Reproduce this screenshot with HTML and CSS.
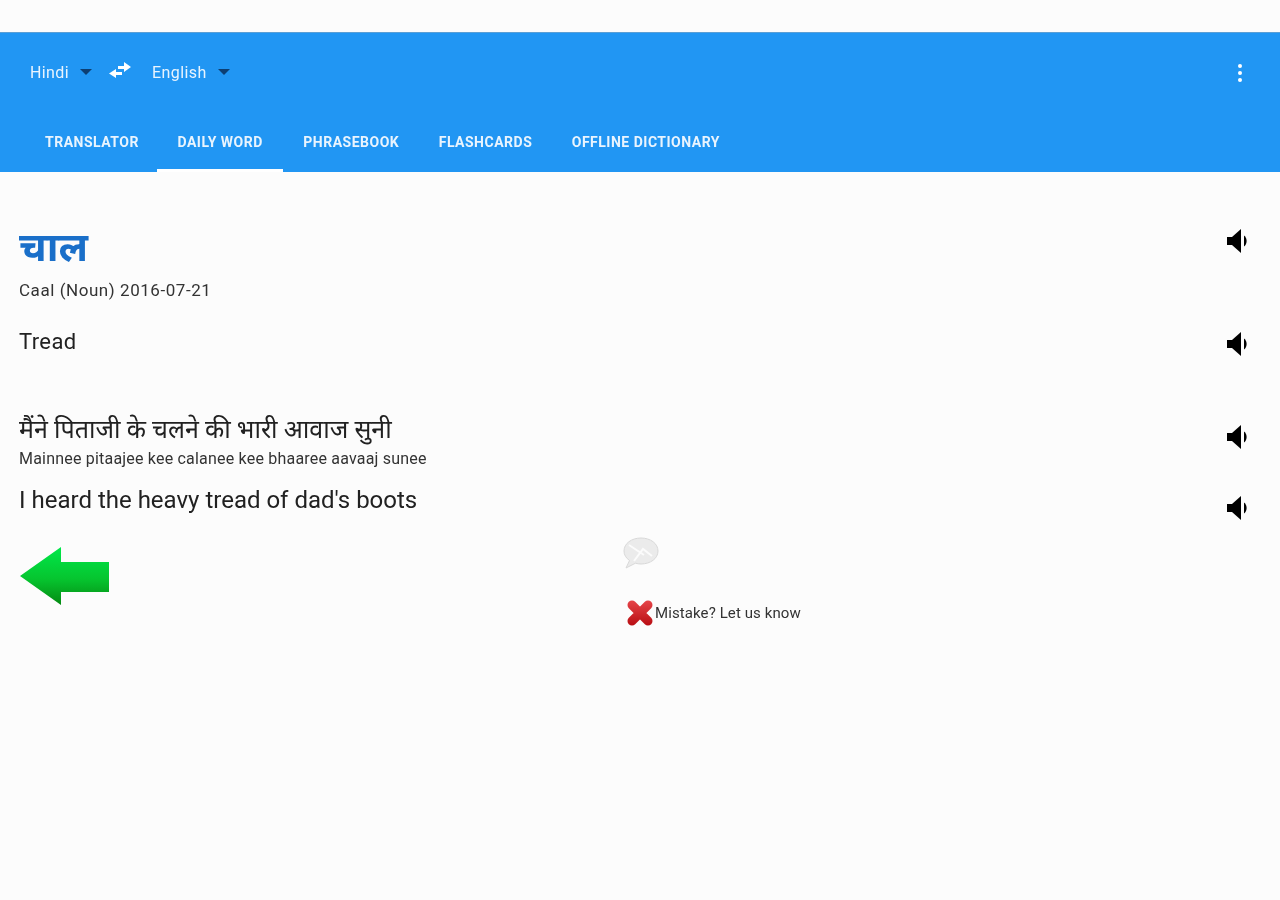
FILE: index.html
```html
<!DOCTYPE html>
<html lang="en">
<head>
  <meta charset="UTF-8">
  <title>Daily Word</title>
  <link rel="stylesheet" href="styles.css">
</head>
<body>

<svg class="defs" width="0" height="0" aria-hidden="true">
  <defs>
    <symbol id="speaker" viewBox="0 0 24 24">
      <path d="M1 8h5l9-8v24l-9-8H1z" fill="#000"/>
      <path d="M18 6.500c3.500 2.500 3.500 8.500 0 11z" fill="#000"/>
    </symbol>
    <linearGradient id="arrowFill" x1="0" y1="0" x2="0" y2="1">
      <stop offset="0" stop-color="#00e84a"/>
      <stop offset="0.55" stop-color="#06c52f"/>
      <stop offset="1" stop-color="#058a12"/>
    </linearGradient>
    <linearGradient id="crossFill" gradientUnits="userSpaceOnUse" x1="0" y1="0" x2="0" y2="27">
      <stop offset="0" stop-color="#e8484c"/>
      <stop offset="1" stop-color="#b80d12"/>
    </linearGradient>
  </defs>
</svg>

<header class="appbar">
  <div class="toolbar">
    <div class="lang">Hindi<span class="caret"></span></div>
    <svg class="swap" width="24" height="20" viewBox="0 0 24 20">
      <path d="M10 5h6V1l7 5-7 5V8h-6z" fill="#fff"/>
      <path d="M14 11H8V8l-7 4.500L8 17v-3h6z" fill="#fff"/>
    </svg>
    <div class="lang">English<span class="caret"></span></div>
    <div class="menu"><span></span><span></span><span></span></div>
  </div>
  <nav class="tabs">
    <a class="tab">TRANSLATOR</a>
    <a class="tab active">DAILY WORD</a>
    <a class="tab">PHRASEBOOK</a>
    <a class="tab">FLASHCARDS</a>
    <a class="tab">OFFLINE DICTIONARY</a>
  </nav>
</header>

<main class="content">
  <div class="row row-word">
    <div>
      <h1 class="word">चाल</h1>
      <p class="meta">Caal (Noun) 2016-07-21</p>
    </div>
    <svg class="sound sound-word"><use href="#speaker"/></svg>
  </div>

  <div class="row row-meaning">
    <p class="big">Tread</p>
    <svg class="sound sound-meaning"><use href="#speaker"/></svg>
  </div>

  <div class="row row-example">
    <div>
      <p class="hindi">मैंने पिताजी के चलने की भारी आवाज सुनी</p>
      <p class="translit">Mainnee pitaajee kee calanee kee bhaaree aavaaj sunee</p>
    </div>
    <svg class="sound sound-example"><use href="#speaker"/></svg>
  </div>

  <div class="row row-sentence">
    <p class="sentence">I heard the heavy tread of dad's boots</p>
    <svg class="sound sound-sentence"><use href="#speaker"/></svg>
  </div>

  <div class="actions">
    <svg class="back" width="92" height="60" viewBox="0 0 92 60">
      <path d="M1 30 42 1v15h48v30H42v13z" fill="url(#arrowFill)"/>
    </svg>
    <div class="feedback">
      <svg class="bubble" width="36" height="32" viewBox="0 0 36 32">
        <path d="M18 1c9.500 0 17 5.500 17 13s-7.500 13-17 13c-2 0-4-.3-5.500-.8L3 31l3.500-7.500C3 21 1 18 1 14 1 6.500 8.500 1 18 1z" fill="#ebebeb" stroke="#d8d8d8"/>
        <path d="M6 8l15 10M29 19 20 12 11 24" stroke="#fbfbfb" stroke-width="2" fill="none"/>
      </svg>
      <div class="mistake">
        <svg class="cross" width="28" height="28" viewBox="0 0 28 28">
          <path d="M6 6l16 16M22 6 6 22" stroke="url(#crossFill)" stroke-width="9" stroke-linecap="round" fill="none"/>
        </svg>
        <span class="mistake-text">Mistake? Let us know</span>
      </div>
    </div>
  </div>
</main>

</body>
</html>
```

FILE: styles.css
```css
* {
  box-sizing: border-box;
}

html,
body {
  height: 100%;
}

body {
  margin: 0;
  padding-top: 32px;
  background-color: #fcfcfc;
  font-family: Roboto, "Noto Sans", "DejaVu Sans", sans-serif;
  color: #212121;
  overflow: hidden;
}

p,
h1 {
  margin: 0;
}

.defs {
  position: absolute;
}

.appbar {
  background-color: #2196f3;
  height: 140px;
  color: #fff;
  border-top: 1px solid #5a9fd6;
}

.toolbar {
  display: flex;
  align-items: center;
  height: 79px;
  padding: 0 30px;
  filter: blur(0.5px);
}

.lang {
  display: flex;
  align-items: center;
  font-size: 16px;
  letter-spacing: 0.4px;
  color: #e9f4fe;
}

.caret {
  width: 0;
  height: 0;
  margin-left: 11px;
  margin-top: -2px;
  border-left: 6px solid transparent;
  border-right: 6px solid transparent;
  border-top: 6px solid #0d3f73;
}

.swap {
  margin: -4px 20px 0 16px;
}

.menu {
  margin-left: auto;
  margin-right: 8px;
  display: flex;
  flex-direction: column;
  gap: 3px;
}

.menu span {
  width: 4px;
  height: 4px;
  border-radius: 50%;
  background-color: #fff;
}

.tabs {
  display: flex;
  height: 60px;
  padding-left: 25px;
}

.tab {
  display: flex;
  align-items: center;
  padding: 0 19.5px 0 20px;
  font-size: 14px;
  font-weight: 700;
  letter-spacing: 0.5px;
  color: #e9f4fe;
  filter: blur(0.4px);
}

.tab.active {
  margin-left: -1px;
  padding: 3px 20.5px 0 20px;
  border-bottom: 3px solid #fff;
}

.content {
  padding: 0 30px 0 19px;
  filter: blur(0.5px);
}

.row {
  display: flex;
  justify-content: space-between;
  align-items: flex-start;
}

.sound {
  width: 24px;
  height: 24px;
  flex: none;
}

.row-word {
  padding-top: 53px;
}

.sound-word {
  margin-top: 4px;
}

.word {
  font-size: 40px;
  line-height: 46px;
  font-weight: 700;
  color: #1a6fc9;
}

.meta {
  margin-top: 9px;
  font-size: 17px;
  letter-spacing: 0.55px;
  line-height: 20px;
  color: #333;
}

.row-meaning {
  margin-top: 28px;
}

.sound-meaning {
  margin-top: 4px;
}

.big {
  font-size: 22px;
  letter-spacing: 0.4px;
  line-height: 28px;
}

.row-example {
  margin-top: 59px;
}

.sound-example {
  margin-top: 10px;
}

.hindi {
  font-size: 25px;
  line-height: 30px;
}

.translit {
  margin-top: 5px;
  font-size: 16px;
  letter-spacing: 0.2px;
  line-height: 18px;
  color: #333;
}

.row-sentence {
  margin-top: 17px;
}

.sound-sentence {
  margin-top: 11px;
}

.sentence {
  font-size: 24px;
  line-height: 30px;
}

.actions {
  display: flex;
  margin-top: 17px;
}

.back {
  margin-top: 9px;
}

.feedback {
  margin-left: 512px;
}

.bubble {
  display: block;
}

.mistake {
  display: flex;
  align-items: center;
  margin-top: 30px;
  margin-left: 3px;
  font-size: 15px;
  letter-spacing: 0.1px;
  color: #333;
}

.mistake-text {
  margin-left: 1px;
}
```
